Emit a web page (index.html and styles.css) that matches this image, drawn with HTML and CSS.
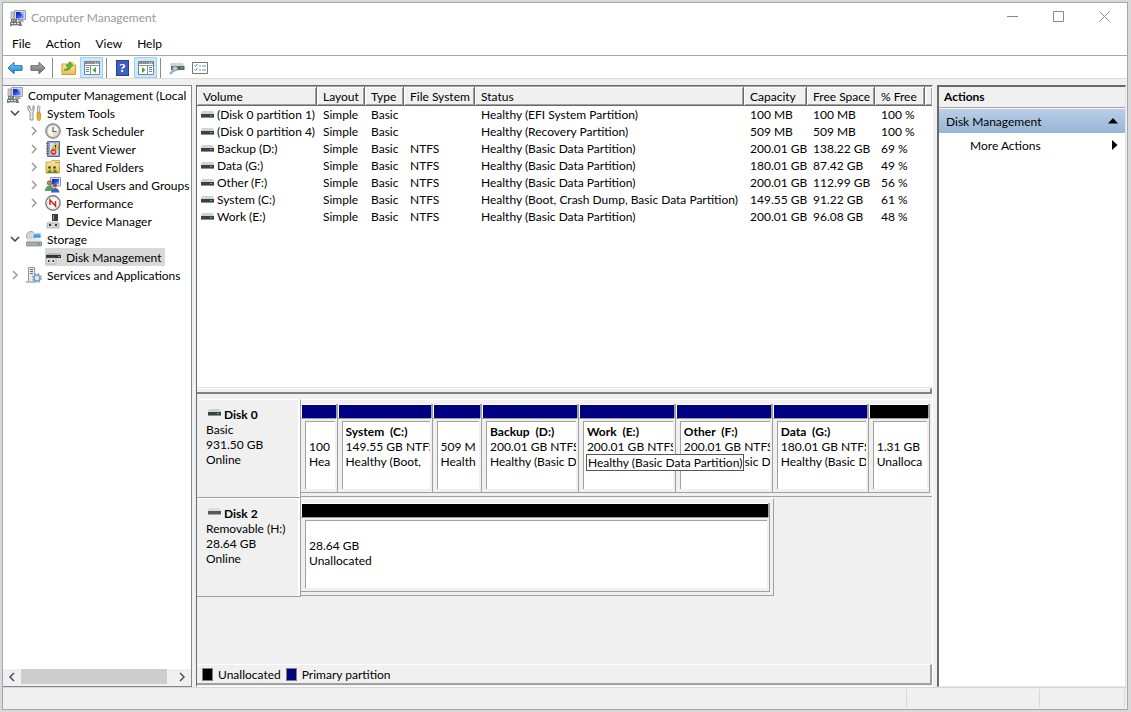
FILE: index.html
```
<!DOCTYPE html>
<html lang="en">
<head>
    <meta charset="UTF-8">
    <meta name="viewport" content="width=device-width, initial-scale=1.0">
    <title>Computer Management</title>
    <link rel="stylesheet" href="styles.css">
</head>
<body>
    <!-- shared icons -->
    <svg class="sprite" aria-hidden="true">
        <defs>
            <linearGradient id="gBlue" x1="0" y1="0" x2="1" y2="1"><stop offset="0" stop-color="#0a1fb0"/><stop offset=".5" stop-color="#2747e0"/><stop offset="1" stop-color="#a9c4ff"/></linearGradient>
            <linearGradient id="gSky" x1="0" y1="0" x2="0" y2="1"><stop offset="0" stop-color="#7fd0f7"/><stop offset="1" stop-color="#1581cf"/></linearGradient>
            <linearGradient id="gGray" x1="0" y1="0" x2="0" y2="1"><stop offset="0" stop-color="#b5b5b5"/><stop offset="1" stop-color="#6c6c6c"/></linearGradient>
            <linearGradient id="gFolder" x1="0" y1="0" x2="0" y2="1"><stop offset="0" stop-color="#fbe9a0"/><stop offset="1" stop-color="#e9bd4c"/></linearGradient>
        </defs>
        <symbol id="computer" viewBox="0 0 16 16">
            <path d="M1 2h3v7H1z" fill="#c9ccd0" stroke="#888" stroke-width=".6"/>
            <path d="M4.500.5h11v9h-11z" fill="#d3d8e4" stroke="#9aa0ae"/>
            <path d="M6 2h8v6.500H6z" fill="url(#gBlue)"/>
            <path d="M10 2h4v5z" fill="#9db8ff"/>
            <path d="M8 10h5l1 2H8z" fill="#a4a8ad"/>
            <path d="M1 9h6v3H1z" fill="#6b7f74"/>
            <path d="M2 10h1v1H2zM4 10h1v1H4z" fill="#c7e3cf"/>
            <path d="M0 12h11l1 4H0z" fill="#747a80"/>
            <path d="M1 13h2v1H1zM4 13h2v1H4zM7 13h2v1H7zM2 15h7v.7H2z" fill="#e4e7ea"/>
        </symbol>
        <symbol id="drive" viewBox="0 0 13 7">
            <path d="M1 0h11l1 3H0z" fill="#cfd3d6"/>
            <path d="M0 3h13v3H0z" fill="#3d4042"/>
            <path d="M0 6h13v1H0z" fill="#8d9092"/>
            <path d="M9 4h2v1h-2z" fill="#35d04a"/>
        </symbol>
        <symbol id="removable" viewBox="0 0 13 7">
            <path d="M1 0h11l1 3H0z" fill="#d9dcdd"/>
            <path d="M0 3h13v3H0z" fill="#55585a"/>
            <path d="M0 6h13v1H0z" fill="#a5a5a5"/>
        </symbol>
        <symbol id="tools" viewBox="0 0 16 16">
            <path d="M2 1v4l2 2v8h3V7l1-2V1H7v3L5.500 5 4 4V1z" fill="#e9e9e9" stroke="#777" stroke-width=".8"/>
            <path d="M11.500 1.500l1.500-1 1 1-.5 6h-2z" fill="#d8d8d8" stroke="#888" stroke-width=".7"/>
            <path d="M11 8h3.500v6l-1 1.500h-1.500L11 14z" fill="#f2b01e" stroke="#b57a0a" stroke-width=".6"/>
        </symbol>
        <symbol id="clock" viewBox="0 0 16 16">
            <circle cx="8" cy="8" r="7.300" fill="#b9bcc1" stroke="#74787d" stroke-width="1"/>
            <circle cx="8" cy="8" r="5.500" fill="#fdf6e2"/>
            <path d="M8 8h5.500A5.500 5.500 0 0 1 8 13.500z" fill="#f2dcae"/>
            <path d="M8 4v4.500h3.500" fill="none" stroke="#3b63a8" stroke-width="1.200"/>
        </symbol>
        <symbol id="event" viewBox="0 0 16 16">
            <path d="M2.500.5h12v15h-12z" fill="#8fa9d2" stroke="#536b95"/>
            <path d="M5 2h8v12H5z" fill="#d3dff2"/>
            <path d="M1 2h3v1H1zM1 4.500h3v1H1zM1 7h3v1H1zM1 9.500h3v1H1zM1 12h3v1H1z" fill="#6b6b6b"/>
            <path d="M10.500 2l3.500 6H7z" fill="#f7cf28" stroke="#a88200" stroke-width=".5"/>
            <path d="M10 4h1v2h-1zM10 6.500h1v1h-1z" fill="#222"/>
            <circle cx="8.500" cy="11" r="3" fill="#d93a34"/>
            <path d="M7.500 10l2 2m0-2l-2 2" stroke="#fff"/>
        </symbol>
        <symbol id="shared" viewBox="0 0 16 16">
            <path d="M1 3h5l1-1.500h7.500V14H1z" fill="url(#gFolder)" stroke="#c49a3a" stroke-width=".8"/>
            <path d="M10 3h4v1h-4z" fill="#59a8d8"/>
            <circle cx="4.500" cy="8.500" r="1.300" fill="#4a3b22"/><circle cx="9.500" cy="8.500" r="1.300" fill="#4a3b22"/>
            <path d="M2 14l3-4 2 4zM7 14l3-4 3 4z" fill="#4f8a3a"/>
        </symbol>
        <symbol id="users" viewBox="0 0 16 16">
            <path d="M5.500.5h10v8.500h-10z" fill="#dfe5f2" stroke="#8f98aa"/>
            <path d="M7 2h7v5.500H7z" fill="url(#gBlue)"/>
            <circle cx="4.500" cy="6" r="2.300" fill="#b98a4c" stroke="#6d4a1d" stroke-width=".6"/>
            <circle cx="10" cy="8.500" r="2" fill="#8b5a2b"/>
            <path d="M0 14c0-7 9-7 9 0z" fill="#5c9f63"/>
            <path d="M6 15.500c0-6 8-6 8.500 0z" fill="#3f62b5"/>
        </symbol>
        <symbol id="perf" viewBox="0 0 16 16">
            <circle cx="8" cy="8" r="7.200" fill="#fff" stroke="#7d7d7d" stroke-width="1.400"/>
            <circle cx="8" cy="8" r="5.500" fill="none" stroke="#c9c9c9" stroke-width=".6"/>
            <path d="M5 10V5l5.500 6V6" fill="none" stroke="#d22626" stroke-width="1.500"/>
        </symbol>
        <symbol id="device" viewBox="0 0 16 16">
            <path d="M7 1h6v8H7z" fill="#3a3c3e"/>
            <path d="M8 2h1v5H8z" fill="#999"/>
            <path d="M3 8h10l1 2H2z" fill="#eceded"/>
            <path d="M2 10h12v5H2z" fill="#d3d5d6" stroke="#999" stroke-width=".6"/>
            <path d="M4 11h2v2H4zM10 11h2v2h-2z" fill="#333"/>
        </symbol>
        <symbol id="storage" viewBox="0 0 16 16">
            <circle cx="5" cy="5" r="4.500" fill="#d8dcdf" stroke="#8b9094" stroke-width=".8"/>
            <circle cx="5" cy="5" r="1.300" fill="#fff" stroke="#999" stroke-width=".5"/>
            <path d="M7 2h8v5H7z" fill="url(#gSky)" stroke="#e8eef2" stroke-width=".8"/>
            <path d="M2 8h12l1.500 3H.5z" fill="#e4e6e8"/>
            <path d="M.5 11h15v4H.5z" fill="#a6abaf" stroke="#6d7276" stroke-width=".6"/>
            <path d="M12 12h2v1.500h-2z" fill="#2fc54b"/>
        </symbol>
        <symbol id="diskmgmt" viewBox="0 0 16 16">
            <path d="M3 4h12l1 2H1z" fill="#b5b9bb"/>
            <path d="M1 6h15v3H1z" fill="#303335"/>
            <path d="M13 7h2v1h-2z" fill="#35d04a"/>
            <path d="M1 9h10v6H1z" fill="#dcdedf" stroke="#999" stroke-width=".5"/>
            <path d="M3 11h1.500v2H3zM7.500 11H9v2H7.500z" fill="#333"/>
        </symbol>
        <symbol id="services" viewBox="0 0 16 16">
            <path d="M2.500.5h6v14h-6z" fill="#e6e9eb" stroke="#92989c"/>
            <path d="M4 2h3v1H4zM4 4h3v1H4zM4 6h3v1H4z" fill="#6d7479"/>
            <path d="M0 14h9v2H0z" fill="#b8bdc0"/>
            <circle cx="11" cy="11" r="3" fill="#dce8f3" stroke="#7d9cbb" stroke-width="1.600"/>
            <circle cx="11" cy="11" r="4.300" fill="none" stroke="#7d9cbb" stroke-width="1.400" stroke-dasharray="1.700 1.700"/>
        </symbol>
        <symbol id="back" viewBox="0 0 17 14">
            <path d="M1 7l6.500-6v3.500H16v5H7.500V13z" fill="url(#gSky)" stroke="#1a70b5"/>
        </symbol>
        <symbol id="forward" viewBox="0 0 17 14">
            <path d="M16 7L9.500 1v3.500H1v5h8.500V13z" fill="url(#gGray)" stroke="#666"/>
        </symbol>
        <symbol id="upfolder" viewBox="0 0 16 16">
            <path d="M1 4h5l1 1h7.500v9.500H1z" fill="url(#gFolder)" stroke="#c89b35"/>
            <path d="M9 5h4v-3H9z" fill="#f1d27a"/>
            <path d="M3 10c3-1 4-2 4-4H5l4-4.500L12 6h-2c0 3-3 5-7 4z" fill="#59b83a" stroke="#2f8a1a" stroke-width=".6"/>
        </symbol>
        <symbol id="tree" viewBox="0 0 16 14">
            <path d="M.5.5h15v13H.5z" fill="#fff" stroke="#7c8288"/>
            <path d="M1 1h14v2H1z" fill="#8d9298"/><path d="M11 1.500h1v1h-1zM13 1.500h1v1h-1z" fill="#fff"/>
            <path d="M1 4.500h14" stroke="#8d9298"/><path d="M6.500 5v8" stroke="#8d9298"/>
            <path d="M2 6.500h3M2 8.500h3M2 10.500h3" stroke="#5b87b5"/>
            <path d="M12 6v6L8.500 9z" fill="#42a832"/>
        </symbol>
        <symbol id="actionpane" viewBox="0 0 16 14">
            <path d="M.5.5h15v13H.5z" fill="#fff" stroke="#7c8288"/>
            <path d="M1 1h14v2H1z" fill="#8d9298"/><path d="M11 1.500h1v1h-1zM13 1.500h1v1h-1z" fill="#fff"/>
            <path d="M1 4.500h14" stroke="#8d9298"/><path d="M9.500 5v8" stroke="#8d9298"/>
            <path d="M11 6.500h3M11 8.500h3M11 10.500h3" stroke="#5b87b5"/>
            <path d="M4 6v6l3.500-3z" fill="#42a832"/>
        </symbol>
        <symbol id="console" viewBox="0 0 16 14">
            <path d="M2 2h12l1.500 3h-15z" fill="#cfd4d6"/>
            <path d="M2 5h13.500v4H2z" fill="#5d6265"/>
            <path d="M12 6h2v1.500h-2z" fill="#35d04a"/>
            <path d="M1 13l4-4" stroke="#8fa5b5" stroke-width="2"/>
            <circle cx="6" cy="7.500" r="2.500" fill="#b5c9d4" stroke="#78909e" stroke-width=".8"/>
        </symbol>
        <symbol id="list" viewBox="0 0 16 12">
            <path d="M.5.5h15v11H.5z" fill="#fff" stroke="#73787d"/>
            <path d="M2.500 3.500l1 1 2-2.500M2.500 7.500l1 1 2-2.500" fill="none" stroke="#3b86d1"/>
            <path d="M7 4h2m1 0h4M7 8h2m1 0h4" stroke="#8b9196"/>
        </symbol>
        <symbol id="chevron" viewBox="0 0 10 10"><path d="M3 1l4 4-4 4" fill="none" stroke="currentColor" stroke-width="1.500"/></symbol>
        <symbol id="chevdown" viewBox="0 0 10 10"><path d="M1 3l4 4 4-4" fill="none" stroke="currentColor" stroke-width="1.500"/></symbol>
    </svg>

    <div class="window">
        <header class="titlebar">
            <svg class="icon"><use href="#computer"/></svg>
            <h1>Computer Management</h1>
            <div class="controls">
                <button type="button" aria-label="Minimize"><svg viewBox="0 0 11 11"><path d="M0 5.500h11"/></svg></button>
                <button type="button" aria-label="Maximize"><svg viewBox="0 0 11 11"><path d="M.5.5h10v10H.5z"/></svg></button>
                <button type="button" aria-label="Close"><svg viewBox="0 0 11 11"><path d="M.5.5l10 10m0-10l-10 10"/></svg></button>
            </div>
        </header>

        <nav class="menubar">
            <button type="button">File</button>
            <button type="button">Action</button>
            <button type="button">View</button>
            <button type="button">Help</button>
        </nav>

        <div class="toolbar">
            <button type="button" aria-label="Back"><svg class="icon"><use href="#back"/></svg></button>
            <button type="button" aria-label="Forward"><svg class="icon"><use href="#forward"/></svg></button>
            <span class="sep"></span>
            <button type="button" aria-label="Up one level"><svg class="icon"><use href="#upfolder"/></svg></button>
            <button type="button" class="on" aria-label="Show console tree"><svg class="icon"><use href="#tree"/></svg></button>
            <span class="sep"></span>
            <button type="button" aria-label="Help"><span class="help">?</span></button>
            <button type="button" class="on" aria-label="Show action pane"><svg class="icon"><use href="#actionpane"/></svg></button>
            <span class="sep"></span>
            <button type="button" aria-label="Disk settings"><svg class="icon"><use href="#console"/></svg></button>
            <button type="button" aria-label="Properties"><svg class="icon"><use href="#list"/></svg></button>
        </div>

        <div class="workspace">
            <aside class="tree-pane">
                <ul class="tree">
                    <li class="root"><svg class="icon"><use href="#computer"/></svg><span>Computer Management (Local</span></li>
                    <li><button type="button" class="open" aria-label="Collapse System Tools"><svg><use href="#chevdown"/></svg></button><svg class="icon"><use href="#tools"/></svg><span>System Tools</span></li>
                    <li class="sub"><button type="button" aria-label="Expand Task Scheduler"><svg><use href="#chevron"/></svg></button><svg class="icon"><use href="#clock"/></svg><span>Task Scheduler</span></li>
                    <li class="sub"><button type="button" aria-label="Expand Event Viewer"><svg><use href="#chevron"/></svg></button><svg class="icon"><use href="#event"/></svg><span>Event Viewer</span></li>
                    <li class="sub"><button type="button" aria-label="Expand Shared Folders"><svg><use href="#chevron"/></svg></button><svg class="icon"><use href="#shared"/></svg><span>Shared Folders</span></li>
                    <li class="sub"><button type="button" aria-label="Expand Local Users and Groups"><svg><use href="#chevron"/></svg></button><svg class="icon"><use href="#users"/></svg><span>Local Users and Groups</span></li>
                    <li class="sub"><button type="button" aria-label="Expand Performance"><svg><use href="#chevron"/></svg></button><svg class="icon"><use href="#perf"/></svg><span>Performance</span></li>
                    <li class="sub leaf"><svg class="icon"><use href="#device"/></svg><span>Device Manager</span></li>
                    <li><button type="button" class="open" aria-label="Collapse Storage"><svg><use href="#chevdown"/></svg></button><svg class="icon"><use href="#storage"/></svg><span>Storage</span></li>
                    <li class="sub leaf"><div class="selected"><svg class="icon"><use href="#diskmgmt"/></svg><span>Disk Management</span></div></li>
                    <li><button type="button" aria-label="Expand Services and Applications"><svg><use href="#chevron"/></svg></button><svg class="icon"><use href="#services"/></svg><span>Services and Applications</span></li>
                </ul>
                <div class="scrollbar">
                    <button type="button" aria-label="Scroll left"><svg class="flip"><use href="#chevron"/></svg></button>
                    <div class="track"><div class="thumb"></div></div>
                    <button type="button" aria-label="Scroll right"><svg><use href="#chevron"/></svg></button>
                </div>
            </aside>

            <main class="main-pane">
                <div class="volumes">
                    <table>
                        <colgroup>
                            <col class="c-volume"><col class="c-layout"><col class="c-type"><col class="c-fs"><col class="c-status"><col class="c-capacity"><col class="c-free"><col class="c-pct"><col>
                        </colgroup>
                        <thead>
                            <tr><th>Volume</th><th>Layout</th><th>Type</th><th>File System</th><th>Status</th><th>Capacity</th><th>Free Space</th><th>% Free</th><th></th></tr>
                        </thead>
                        <tbody>
                            <tr><td><svg class="drive"><use href="#drive"/></svg>(Disk 0 partition 1)</td><td>Simple</td><td>Basic</td><td></td><td>Healthy (EFI System Partition)</td><td>100 MB</td><td>100 MB</td><td>100 %</td><td></td></tr>
                            <tr><td><svg class="drive"><use href="#drive"/></svg>(Disk 0 partition 4)</td><td>Simple</td><td>Basic</td><td></td><td>Healthy (Recovery Partition)</td><td>509 MB</td><td>509 MB</td><td>100 %</td><td></td></tr>
                            <tr><td><svg class="drive"><use href="#drive"/></svg>Backup (D:)</td><td>Simple</td><td>Basic</td><td>NTFS</td><td>Healthy (Basic Data Partition)</td><td>200.01 GB</td><td>138.22 GB</td><td>69 %</td><td></td></tr>
                            <tr><td><svg class="drive"><use href="#drive"/></svg>Data (G:)</td><td>Simple</td><td>Basic</td><td>NTFS</td><td>Healthy (Basic Data Partition)</td><td>180.01 GB</td><td>87.42 GB</td><td>49 %</td><td></td></tr>
                            <tr><td><svg class="drive"><use href="#drive"/></svg>Other (F:)</td><td>Simple</td><td>Basic</td><td>NTFS</td><td>Healthy (Basic Data Partition)</td><td>200.01 GB</td><td>112.99 GB</td><td>56 %</td><td></td></tr>
                            <tr><td><svg class="drive"><use href="#drive"/></svg>System (C:)</td><td>Simple</td><td>Basic</td><td>NTFS</td><td>Healthy (Boot, Crash Dump, Basic Data Partition)</td><td>149.55 GB</td><td>91.22 GB</td><td>61 %</td><td></td></tr>
                            <tr><td><svg class="drive"><use href="#drive"/></svg>Work (E:)</td><td>Simple</td><td>Basic</td><td>NTFS</td><td>Healthy (Basic Data Partition)</td><td>200.01 GB</td><td>96.08 GB</td><td>48 %</td><td></td></tr>
                        </tbody>
                    </table>
                </div>
                <div class="splitter"></div>

                <div class="disks">
                    <section class="disk">
                        <div class="disk-info">
                            <h2><svg class="drive"><use href="#drive"/></svg>Disk 0</h2>
                            <p>Basic</p>
                            <p>931.50 GB</p>
                            <p>Online</p>
                        </div>
                        <div class="partitions">
                            <div class="part" style="flex-grow: 36"><div class="bar"></div><div class="box"><div class="clip"><b></b><p>100</p><p>Hea</p></div></div></div>
                            <div class="part" style="flex-grow: 95"><div class="bar"></div><div class="box"><div class="clip"><b>System&nbsp; (C:)</b><p>149.55 GB NTFS</p><p>Healthy (Boot,</p></div></div></div>
                            <div class="part" style="flex-grow: 49"><div class="bar"></div><div class="box"><div class="clip"><b></b><p>509 M</p><p>Health</p></div></div></div>
                            <div class="part" style="flex-grow: 97"><div class="bar"></div><div class="box"><div class="clip"><b>Backup&nbsp; (D:)</b><p>200.01 GB NTFS</p><p>Healthy (Basic D</p></div></div></div>
                            <div class="part" style="flex-grow: 97"><div class="bar"></div><div class="box"><div class="clip"><b>Work&nbsp; (E:)</b><p>200.01 GB NTFS</p></div></div><div class="tooltip" role="tooltip">Healthy (Basic Data Partition)</div></div>
                            <div class="part" style="flex-grow: 97"><div class="bar"></div><div class="box"><div class="clip"><b>Other&nbsp; (F:)</b><p>200.01 GB NTFS</p><p>Healthy (Basic D</p></div></div></div>
                            <div class="part" style="flex-grow: 96"><div class="bar"></div><div class="box"><div class="clip"><b>Data&nbsp; (G:)</b><p>180.01 GB NTFS</p><p>Healthy (Basic D</p></div></div></div>
                            <div class="part free" style="flex-grow: 61"><div class="bar"></div><div class="box"><div class="clip"><b></b><p>1.31 GB</p><p>Unalloca</p></div></div></div>
                        </div>
                    </section>
                    <section class="disk">
                        <div class="disk-info">
                            <h2><svg class="drive"><use href="#removable"/></svg>Disk 2</h2>
                            <p>Removable (H:)</p>
                            <p>28.64 GB</p>
                            <p>Online</p>
                        </div>
                        <div class="partitions short">
                            <div class="part free"><div class="bar"></div><div class="box"><div class="clip"><b></b><p>28.64 GB</p><p>Unallocated</p></div></div></div>
                        </div>
                    </section>
                </div>

                <footer class="legend">
                    <span class="swatch black"></span><span>Unallocated</span>
                    <span class="swatch navy"></span><span>Primary partition</span>
                </footer>
            </main>

            <aside class="actions">
                <h2>Actions</h2>
                <button type="button" class="group">Disk Management<svg viewBox="0 0 10 6"><path d="M5 0l5 5.500H0z"/></svg></button>
                <button type="button" class="item">More Actions<svg viewBox="0 0 6 10"><path d="M0 0l5.500 5L0 10z"/></svg></button>
            </aside>
        </div>

        <div class="statusbar"><span></span><span></span><span></span></div>
    </div>
</body>
</html>
```
FILE: styles.css
```
* {
    box-sizing: border-box;
}
body {
    margin: 0;
    min-height: 100vh;
    padding: 2px 3px 2px 2px;
    display: flex;
    background: #d9d9d9;
    font-family: Lato, "Open Sans", sans-serif;
    font-size: 12px;
    line-height: 17px;
    color: #000;
}
h1, h2, p, ul {
    margin: 0;
    padding: 0;
}
button {
    font: inherit;
    color: inherit;
    background: none;
    border: 0;
    padding: 0;
}
.sprite {
    position: absolute;
    width: 0;
    height: 0;
}
.icon {
    width: 16px;
    height: 16px;
    flex: none;
}
.window {
    flex: 1;
    min-width: 0;
    display: flex;
    flex-direction: column;
    background: #f0f0f0;
    border: 1px solid #a5a8ab;
}

/* title, menu, toolbar */
.titlebar {
    display: flex;
    align-items: center;
    height: 29px;
    padding-left: 7px;
    gap: 5px;
    background: #fff;
}
.titlebar h1 {
    flex: 1;
    font-size: 12px;
    font-weight: normal;
    color: #999;
}
.controls {
    display: flex;
}
.controls button {
    width: 46px;
    height: 28px;
}
.controls svg {
    width: 11px;
    height: 11px;
    fill: none;
    stroke: #8a8a8a;
}
.menubar {
    display: flex;
    gap: 15px;
    height: 24px;
    padding-left: 9px;
    background: #fff;
    border-bottom: 1px solid #a8a8a8;
}
.toolbar {
    display: flex;
    align-items: center;
    height: 23px;
    padding-top: 1px;
    background: #fff;
    border-bottom: 1px solid #dcdcdc;
}
.toolbar button {
    display: flex;
    align-items: center;
    justify-content: center;
    width: 23px;
    height: 21px;
}
.toolbar .on {
    background: #cce8ff;
    border: 1px solid #99d1ff;
}
.toolbar .sep {
    width: 1px;
    height: 20px;
    margin: 0 4px 0 3px;
    background: #8d8d8d;
}
.help {
    width: 13px;
    height: 16px;
    background: #3c5fc0;
    border: 1px solid #2b3f8c;
    color: #fff;
    font: bold 13px/14px "Liberation Serif", serif;
}

/* three panes */
.workspace {
    flex: 1;
    display: grid;
    grid-template-columns: 189px minmax(0, 1fr) 190px;
    gap: 4px;
    padding-top: 6px;
}
.tree-pane {
    display: flex;
    flex-direction: column;
    min-width: 0;
    background: #fff;
    border: 1px solid #828790;
    border-left: 0;
}
.tree {
    flex: 1;
    list-style: none;
    overflow: hidden;
}
.tree li,
.tree .selected {
    display: flex;
    align-items: center;
    height: 18px;
    white-space: nowrap;
}
.tree li {
    padding-left: 6px;
}
.tree li.root {
    padding-left: 4px;
}
.tree li.sub {
    padding-left: 25px;
}
.tree li.leaf {
    padding-left: 42px;
}
.tree .icon {
    margin-right: 5px;
}
.tree button {
    flex: none;
    width: 17px;
    height: 10px;
    padding-left: 1px;
    text-align: left;
    color: #9a9a9a;
    line-height: 0;
}
.tree button.open {
    color: #404040;
}
.tree button svg,
.scrollbar svg {
    width: 10px;
    height: 10px;
}
.tree .selected {
    background: #d9d9d9;
    padding-right: 4px;
}
.scrollbar {
    display: flex;
    height: 17px;
    padding-bottom: 2px;
    background: #f0f0f0;
    color: #505050;
}
.scrollbar button {
    width: 18px;
    line-height: 0;
}
.scrollbar .flip {
    transform: scaleX(-1);
}
.track {
    flex: 1;
}
.thumb {
    width: 96%;
    height: 100%;
    background: #cdcdcd;
}

/* volume list */
.main-pane {
    display: flex;
    flex-direction: column;
    border: 1px solid #fff;
    border-top-color: #696969;
    border-left-color: #696969;
}
.volumes {
    height: 302px;
    background: #fff;
    border-top: 1px solid #a0a0a0;
    border-bottom: 1px solid #e3e3e3;
}
table {
    width: 100%;
    table-layout: fixed;
    border-collapse: separate;
    border-spacing: 0;
}
.c-volume { width: 120px; }
.c-layout { width: 48px; }
.c-type { width: 39px; }
.c-fs { width: 71px; }
.c-status { width: 269px; }
.c-capacity { width: 63px; }
.c-free { width: 68px; }
.c-pct { width: 50px; }
th,
td {
    height: 17px;
    padding: 0 0 0 6px;
    text-align: left;
    font-weight: normal;
    line-height: 17px;
    white-space: nowrap;
    overflow: hidden;
}
th {
    height: 19px;
    background: #f0f0f0;
    border-right: 1px solid #696969;
    border-bottom: 1px solid #696969;
    box-shadow: inset 1px 1px #fff, inset -1px -1px #a0a0a0;
}
th:last-child {
    border-right: 0;
}
td:first-child {
    padding-left: 4px;
}
.drive {
    width: 13px;
    height: 7px;
    margin-right: 3px;
    vertical-align: 1px;
}
.splitter {
    height: 6px;
    border-top: 1px solid #fff;
    border-right: 2px solid #828282;
    border-bottom: 2px solid #828282;
}

/* graphical view */
.disks {
    flex: 1;
    padding-top: 5px;
}
.disk {
    display: flex;
    line-height: 15px;
}
.disk-info {
    width: 104px;
    height: 99px;
    padding: 7px 0 0 9px;
    border-top: 1px solid #fff;
    border-right: 1px solid #a0a0a0;
    border-bottom: 1px solid #a0a0a0;
    box-shadow: inset -2px 0 #fff;
    white-space: nowrap;
}
.disk-info h2 {
    font-size: 12px;
    padding-left: 2px;
}
.disk-info .drive {
    vertical-align: 3px;
}
.partitions {
    flex: 1;
    display: flex;
    min-width: 0;
    margin-bottom: 1px;
    padding: 4px 2px 3px 0;
    border-top: 1px solid #fff;
    border-bottom: 1px solid #a0a0a0;
}
.partitions.short {
    flex: none;
    width: 473px;
    padding-right: 3px;
    border-right: 1px solid #a0a0a0;
}
.part {
    position: relative;
    flex: 1 1 0;
    min-width: 0;
    display: flex;
    flex-direction: column;
    border-right: 1px solid #a0a0a0;
    border-bottom: 1px solid #a0a0a0;
}
.bar {
    height: 14px;
    margin-right: 1px;
    background: #000080;
    border: 1px solid #fff;
    border-width: 1px 0 0 1px;
    box-shadow: 0 1px #a0a0a0, 1px 0 #a0a0a0;
}
.free .bar {
    background: #000;
}
.box {
    flex: 1;
    margin: 3px 2px 3px 4px;
    padding: 2px 0 0 3px;
    background: #fff;
    border: 1px solid #a0a0a0;
    border-width: 1px 0 0 1px;
}
.clip {
    overflow: hidden;
    white-space: nowrap;
}
.clip b {
    display: block;
    height: 15px;
}
.tooltip {
    position: absolute;
    top: 50px;
    left: 7px;
    z-index: 1;
    padding: 0 1px;
    background: #fff;
    border: 1px solid #575757;
    white-space: nowrap;
}
.legend {
    display: flex;
    align-items: center;
    gap: 5px;
    height: 21px;
    margin-bottom: 1px;
    padding-left: 5px;
    border: 1px solid #a0a0a0;
    border-width: 1px 2px 2px 0;
    border-top-color: #fff;
}
.swatch {
    width: 11px;
    height: 13px;
    border: 1px solid #808080;
}
.black { background: #000; }
.navy { background: #000080; }

/* actions pane */
.actions {
    background: #fff;
    border: 1px solid #e3e3e3;
    border-width: 2px 1px 1px 2px;
    border-top-color: #696969;
    border-left-color: #696969;
    margin-right: 1px;
}
.actions h2 {
    height: 21px;
    padding-left: 5px;
    font-size: 12px;
    line-height: 20px;
    background: #f0f0f0;
    border-bottom: 1px solid #a0a0a0;
}
.actions button {
    display: flex;
    align-items: center;
    justify-content: space-between;
    width: 100%;
    height: 24px;
    padding: 0 7px;
}
.actions .group {
    margin-top: 1px;
    background: linear-gradient(#b9cfe8, #98b4d3);
}
.actions .group svg {
    width: 10px;
    height: 6px;
}
.actions .item {
    padding-left: 31px;
}
.actions .item svg {
    width: 6px;
    height: 10px;
}

.statusbar {
    display: grid;
    grid-template-columns: 1fr 133px 85px;
    height: 22px;
    padding: 1px 2px 2px 0;
    border-top: 1px solid #d7d7d7;
}
.statusbar span {
    border-right: 1px solid #d7d7d7;
}
```
